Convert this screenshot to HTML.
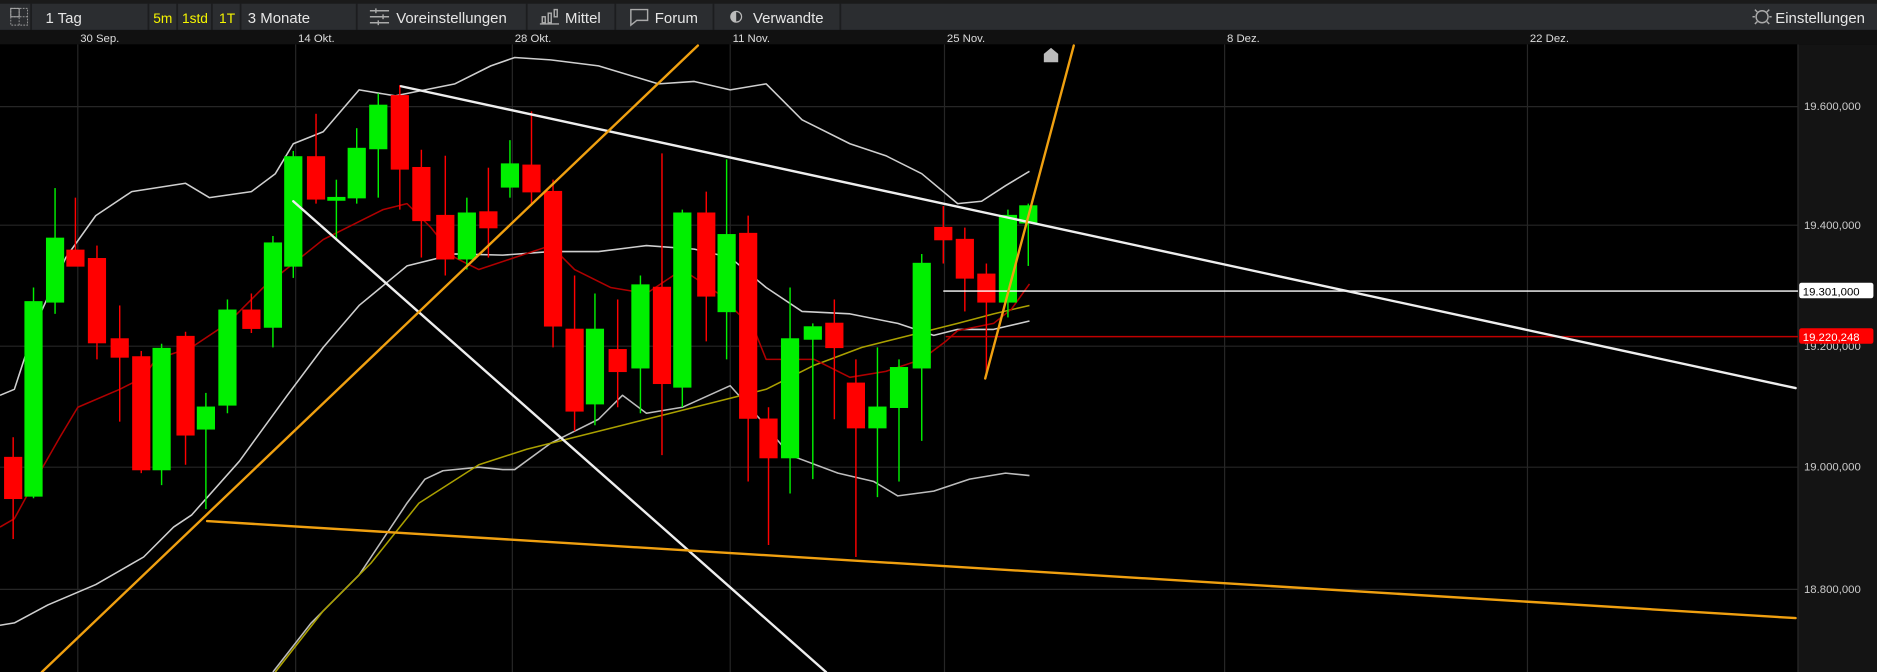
<!DOCTYPE html>
<html><head><meta charset="utf-8"><style>
html,body{margin:0;padding:0;background:#000;width:1877px;height:672px;overflow:hidden}
svg{display:block}
text{font-family:"Liberation Sans",sans-serif}
</style></head><body>
<svg width="1877" height="672" viewBox="0 0 1568 561" preserveAspectRatio="none" xmlns="http://www.w3.org/2000/svg">
<rect width="1568" height="561" fill="#000"/>
<rect x="0" y="0" width="1568" height="3" fill="#1a1a1a"/>
<rect x="0" y="3" width="1568" height="22" fill="#2b2d30"/>
<g stroke="#1c1d1f" stroke-width="1.5">
<line x1="26" y1="3" x2="26" y2="25"/><line x1="298" y1="3" x2="298" y2="25"/>
<line x1="440" y1="3" x2="440" y2="25"/><line x1="514" y1="3" x2="514" y2="25"/>
<line x1="596" y1="3" x2="596" y2="25"/><line x1="702" y1="3" x2="702" y2="25"/>
<line x1="124" y1="3" x2="124" y2="25"/><line x1="148" y1="3" x2="148" y2="25"/>
<line x1="177" y1="3" x2="177" y2="25"/><line x1="201" y1="3" x2="201" y2="25"/>
</g>
<g fill="none" stroke="#999" stroke-width="0.8" stroke-dasharray="1.5,1">
<rect x="9" y="7" width="14" height="14"/><line x1="16" y1="7" x2="16" y2="21"/><line x1="9" y1="14" x2="23" y2="14"/>
</g>
<rect x="9" y="7" width="7" height="7" fill="none" stroke="#aaa" stroke-width="0.8"/>
<g font-size="12.5" fill="#e6e6e6">
<text x="38" y="19">1 Tag</text>
<text x="128" y="19" fill="#f5f500" font-size="11.5">5m</text>
<text x="152" y="19" fill="#f5f500" font-size="11.5">1std</text>
<text x="183" y="19" fill="#f5f500" font-size="11.5">1T</text>
<text x="207" y="19">3 Monate</text>
<text x="331" y="19">Voreinstellungen</text>
<text x="472" y="19">Mittel</text>
<text x="547" y="19">Forum</text>
<text x="629" y="19">Verwandte</text>
<text x="1483" y="19">Einstellungen</text>
</g>
<g stroke="#aaa" stroke-width="1.2" fill="none">
<line x1="309" y1="9" x2="325" y2="9"/><line x1="309" y1="14" x2="325" y2="14"/><line x1="309" y1="19" x2="325" y2="19"/>
<line x1="314" y1="7" x2="314" y2="11"/><line x1="320" y1="12" x2="320" y2="16"/><line x1="316" y1="17" x2="316" y2="21"/>
<rect x="453" y="14" width="2.5" height="5"/><rect x="458" y="11" width="2.5" height="8"/><rect x="463" y="8" width="2.5" height="6"/>
<line x1="451" y1="20" x2="467" y2="20"/>
<path d="M527 8h14v9h-9l-5 4z"/>
<circle cx="1472" cy="14" r="5"/>
<path d="M1466 8l2 2M1478 8l-2 2M1466 20l2-2M1478 20l-2-2M1464 14h2M1478 14h2"/>
</g>
<circle cx="615" cy="14" r="5" fill="#bbb"/><path d="M615 10a4 4 0 0 1 0 8z" fill="#2b2d30"/>
<rect x="0" y="25" width="1568" height="12" fill="#111"/>
<g font-size="9.5" fill="#ddd">
<text x="67" y="35">30 Sep.</text><text x="249" y="35">14 Okt.</text><text x="430" y="35">28 Okt.</text>
<text x="612" y="35">11 Nov.</text><text x="791" y="35">25 Nov.</text><text x="1025" y="35">8 Dez.</text><text x="1278" y="35">22 Dez.</text>
</g>
<rect x="1502" y="37" width="66" height="524" fill="#141414"/>
<line x1="1502" y1="37" x2="1502" y2="561" stroke="#2a2a2a"/>
<g stroke="#262626" stroke-width="1">
<line x1="65" y1="37" x2="65" y2="561"/><line x1="247" y1="37" x2="247" y2="561"/><line x1="428" y1="37" x2="428" y2="561"/>
<line x1="610" y1="37" x2="610" y2="561"/><line x1="789" y1="37" x2="789" y2="561"/><line x1="1023" y1="37" x2="1023" y2="561"/><line x1="1276" y1="37" x2="1276" y2="561"/>
<line x1="0" y1="89" x2="1502" y2="89"/><line x1="0" y1="188" x2="1502" y2="188"/><line x1="0" y1="289" x2="1502" y2="289"/>
<line x1="0" y1="390" x2="1502" y2="390"/><line x1="0" y1="492" x2="1502" y2="492"/>
</g>
<g font-size="9.5" fill="#ccc">
<text x="1507" y="92">19.600,000</text><text x="1507" y="191">19.400,000</text><text x="1507" y="292">19.200,000</text>
<text x="1507" y="393">19.000,000</text><text x="1507" y="495">18.800,000</text>
</g>
<g fill="none" stroke-width="1.3" stroke-linejoin="round">
<polyline stroke="#cfcfcf" points="0,330 12,325 30,270 55,215 80,180 110,160 155,153 175,165 210,160 230,145 245,120 270,110 300,75 330,80 380,70 410,55 430,48 460,50 500,55 550,70 580,68 610,75 640,70 670,100 710,120 740,130 770,145 800,170 820,168 840,155 860,143"/>
<polyline stroke="#cfcfcf" points="0,522 12,520 40,505 80,488 120,465 145,440 160,430 200,385 240,330 270,290 300,255 340,222 380,212 420,213 460,210 500,210 540,205 580,208 610,215 640,240 670,260 710,262 750,270 780,280 800,275 830,275 860,268"/>
<polyline stroke="#bdbdbd" points="228,561 260,520 300,480 340,420 355,400 370,393 400,390 420,392 430,392 460,370 480,360 500,350 520,330 540,345 570,340 610,322 635,350 660,380 700,395 730,402 750,414 780,410 810,400 840,395 860,397"/>
<polyline stroke="#aaa000" points="230,561 270,510 310,470 350,420 400,388 440,375 480,365 520,355 560,345 600,335 640,325 680,305 720,290 760,280 800,270 830,262 860,255"/>
<polyline stroke="#b00000" points="0,440 12,433 30,400 50,365 65,340 100,325 120,315 130,300 160,290 190,270 220,240 245,220 270,200 300,185 320,175 340,170 360,190 380,215 400,225 430,215 460,205 480,225 510,240 540,245 570,225 600,245 630,275 640,300 680,300 710,315 740,310 770,300 790,285 800,276 830,270 845,258 860,237"/>
</g>
<g stroke-width="1.2">
<g stroke="#ff0000" fill="#ff0000">
<line x1="11" y1="365" x2="11" y2="450"/><rect x="4" y="382" width="14" height="34"/>
<line x1="63" y1="165" x2="63" y2="220"/><rect x="56" y="209" width="14" height="13"/>
<line x1="81" y1="205" x2="81" y2="300"/><rect x="74" y="216" width="14" height="70"/>
<line x1="100" y1="255" x2="100" y2="352"/><rect x="93" y="283" width="14" height="15"/>
<line x1="118" y1="293" x2="118" y2="395"/><rect x="111" y="298" width="14" height="94"/>
<line x1="155" y1="277" x2="155" y2="388"/><rect x="148" y="281" width="14" height="82"/>
<line x1="210" y1="245" x2="210" y2="278"/><rect x="203" y="259" width="14" height="15"/>
<line x1="264" y1="95" x2="264" y2="170"/><rect x="257" y="131" width="14" height="35"/>
<line x1="334" y1="71" x2="334" y2="175"/><rect x="327" y="80" width="14" height="61"/>
<line x1="352" y1="125" x2="352" y2="215"/><rect x="345" y="140" width="14" height="44"/>
<line x1="372" y1="130" x2="372" y2="230"/><rect x="365" y="180" width="14" height="36"/>
<line x1="408" y1="140" x2="408" y2="215"/><rect x="401" y="177" width="14" height="13"/>
<line x1="444" y1="93" x2="444" y2="170"/><rect x="437" y="138" width="14" height="22"/>
<line x1="462" y1="150" x2="462" y2="290"/><rect x="455" y="160" width="14" height="112"/>
<line x1="480" y1="230" x2="480" y2="360"/><rect x="473" y="275" width="14" height="68"/>
<line x1="516" y1="250" x2="516" y2="340"/><rect x="509" y="292" width="14" height="18"/>
<line x1="553" y1="128" x2="553" y2="380"/><rect x="546" y="240" width="14" height="80"/>
<line x1="590" y1="160" x2="590" y2="285"/><rect x="583" y="178" width="14" height="69"/>
<line x1="625" y1="180" x2="625" y2="402"/><rect x="618" y="195" width="14" height="154"/>
<line x1="642" y1="340" x2="642" y2="455"/><rect x="635" y="350" width="14" height="32"/>
<line x1="697" y1="250" x2="697" y2="350"/><rect x="690" y="270" width="14" height="20"/>
<line x1="715" y1="300" x2="715" y2="465"/><rect x="708" y="320" width="14" height="37"/>
<line x1="788" y1="172" x2="788" y2="220"/><rect x="781" y="190" width="14" height="10"/>
<line x1="806" y1="190" x2="806" y2="260"/><rect x="799" y="200" width="14" height="32"/>
<line x1="824" y1="220" x2="824" y2="312"/><rect x="817" y="229" width="14" height="23"/>
</g>
<g stroke="#00f000" fill="#00f000">
<line x1="28" y1="240" x2="28" y2="416"/><rect x="21" y="252" width="14" height="162"/>
<line x1="46" y1="157" x2="46" y2="262"/><rect x="39" y="199" width="14" height="53"/>
<line x1="135" y1="287" x2="135" y2="405"/><rect x="128" y="291" width="14" height="101"/>
<line x1="172" y1="328" x2="172" y2="425"/><rect x="165" y="340" width="14" height="18"/>
<line x1="190" y1="250" x2="190" y2="345"/><rect x="183" y="259" width="14" height="79"/>
<line x1="228" y1="197" x2="228" y2="290"/><rect x="221" y="203" width="14" height="70"/>
<line x1="245" y1="126" x2="245" y2="232"/><rect x="238" y="131" width="14" height="91"/>
<line x1="281" y1="150" x2="281" y2="200"/><rect x="274" y="165" width="14" height="2"/>
<line x1="298" y1="107" x2="298" y2="170"/><rect x="291" y="124" width="14" height="41"/>
<line x1="316" y1="78" x2="316" y2="165"/><rect x="309" y="88" width="14" height="36"/>
<line x1="390" y1="165" x2="390" y2="225"/><rect x="383" y="178" width="14" height="38"/>
<line x1="426" y1="117" x2="426" y2="165"/><rect x="419" y="137" width="14" height="19"/>
<line x1="497" y1="245" x2="497" y2="355"/><rect x="490" y="275" width="14" height="62"/>
<line x1="535" y1="230" x2="535" y2="345"/><rect x="528" y="238" width="14" height="69"/>
<line x1="570" y1="175" x2="570" y2="340"/><rect x="563" y="178" width="14" height="145"/>
<line x1="607" y1="133" x2="607" y2="300"/><rect x="600" y="196" width="14" height="64"/>
<line x1="660" y1="240" x2="660" y2="412"/><rect x="653" y="283" width="14" height="99"/>
<line x1="679" y1="270" x2="679" y2="400"/><rect x="672" y="273" width="14" height="10"/>
<line x1="733" y1="290" x2="733" y2="415"/><rect x="726" y="340" width="14" height="17"/>
<line x1="751" y1="300" x2="751" y2="402"/><rect x="744" y="307" width="14" height="33"/>
<line x1="770" y1="212" x2="770" y2="368"/><rect x="763" y="220" width="14" height="87"/>
<line x1="842" y1="175" x2="842" y2="265"/><rect x="835" y="180" width="14" height="72"/>
<line x1="859" y1="170" x2="859" y2="222"/><rect x="852" y="172" width="14" height="14"/>
</g>
</g>
<line x1="788" y1="243" x2="1502" y2="243" stroke="#fff" stroke-width="1.2"/>
<line x1="790" y1="281" x2="1502" y2="281" stroke="#c00000" stroke-width="1.2"/>
<rect x="1503" y="236" width="62" height="13" rx="2" fill="#fff"/>
<text x="1506" y="246.5" font-size="9.5" fill="#000">19.301,000</text>
<rect x="1503" y="274" width="62" height="13" rx="2" fill="#ff0000"/>
<text x="1506" y="284.5" font-size="9.5" fill="#fff">19.220,248</text>
<g stroke-width="2" stroke-linecap="round">
<line x1="335" y1="72" x2="1500" y2="324" stroke="#eee"/>
<line x1="245" y1="168" x2="690" y2="561" stroke="#eee"/>
<line x1="35" y1="561" x2="583" y2="38" stroke="#f0a010"/>
<line x1="173" y1="435" x2="1500" y2="516" stroke="#f0a010"/>
<line x1="823" y1="316" x2="897" y2="38" stroke="#f0a010"/>
</g>
<path d="M872 52v-7l6-5 6 5v7z" fill="#bbb"/>
</svg>
</body></html>
